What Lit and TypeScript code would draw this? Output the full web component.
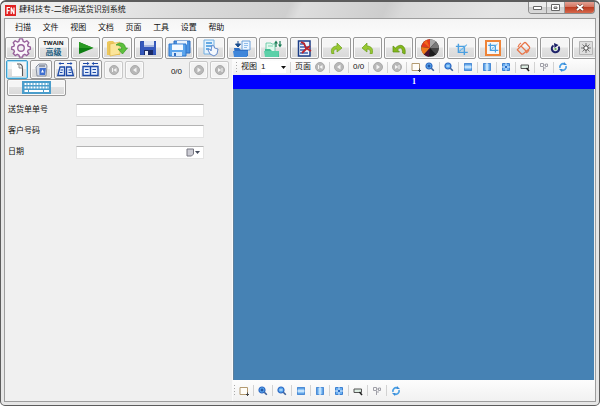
import { LitElement, html, css, svg, nothing, TemplateResult } from "lit";
import { customElement, property } from "lit/decorators.js";

const magnifier = (sign: TemplateResult) => svg`
  <circle cx="4" cy="4" r="3" fill="#5aa9ee" stroke="#2c68c4" stroke-width="1.2"/>
  ${sign}<path d="M6.3 6.3 8.8 8.8" stroke="#3a5f98" stroke-width="1.6"/>`;

const mediaArrow = (d: string) => svg`
  <circle cx="5" cy="5" r="4.5" fill="#b8b8b8" stroke="#aaa"/>
  <path d="${d}" fill="#f4f4f4"/>`;

const cropMarks = svg`
  <path d="M4 1V11H15M1 4H11V14" fill="none" stroke="#4a9fe0" stroke-width="1.7"/>
  <path d="M5 10 14 2" stroke="#63b0e8" stroke-width="1.2"/>
  <path d="M6 7h3v2" fill="none" stroke="#8fcbf0"/>`;

const curvedArrow = svg`
  <path d="M2 12C0 7 3 4 7 4V1L12 6 7 10V7C4 7 3 9 4 12Z" fill="#98c832" stroke="#6ba01c" stroke-width=".7"/>`;

const disk = svg`
  <path d="M1 0H16L17 1V14H0V1Z" fill="#3458bc" stroke="#24408f" stroke-width=".6"/>
  <path d="M4 0H14V6H4Z" fill="#dfe6f4"/><path d="M4 4H14V6H4Z" fill="#a9b8de"/>
  <path d="M4 9H13V14H4Z" fill="#1b2b66"/><path d="M5 10H8V14H5Z" fill="#eef2fb"/>`;

/** Each entry: [width, height, drawing]. */
const ICONS: Record<string, [number, number, TemplateResult]> = {
  logo: [11, 11, svg`<path d="M0 0H11V11H0Z" fill="#e02222"/>
    <path d="M2.2 9V2.5H5M2.2 5.6H4.6M6.2 9V2.5L9 9V2.5" fill="none" stroke="#fff" stroke-width="1.2"/>`],
  gear: [20, 20, svg`<g transform="scale(.91)"><path d="M9.3 1h3.4l.6 2.6 1.8.8 2.3-1.4 2.2 2.2-1.4 2.3.7 1.7 2.3.5v2.8l-2.3.6-.7 1.8 1.4 2.2-2.3 2.2-2.2-1.4-1.8.8-.6 2.3H9.3l-.6-2.3-1.8-.8-2.2 1.4-2.3-2.2 1.4-2.2-.7-1.8-2.3-.6V9.7l2.3-.5.7-1.7-1.4-2.3L4.600 3l2.300 1.400 1.800-.8Z" fill="#fbf6fb" stroke="#96609a" stroke-width="1.5" stroke-linejoin="round"/>
    <circle cx="11" cy="11" r="3.600" fill="#f2f2f2" stroke="#96609a" stroke-width="1.500"/></g>`],
  play: [16, 12, svg`<path d="M1 0 15.500 6 1 12Z" fill="#0d7d12"/><path d="M1 0 15.500 6H1Z" fill="#2a9a24"/>`],
  open: [22, 17, svg`<path d="M1 2 3 1H7L9 3H14V15H1Z" fill="#ecc75c"/>
    <path d="M4 4 14 2V14L4 16Z" fill="#fbe59a" stroke="#dcae3c" stroke-width=".6"/>
    <path d="M10 5C13 2 19 2 19.500 8H21.500L16.500 14 12 9H15.500C16 6 13 5 10 5Z" fill="#5cc03c" stroke="#3a9826" stroke-width=".7"/>`],
  save: [16, 14, disk],
  saveAll: [24, 17, svg`<path d="M6 1H22V13H6Z" fill="#4d93e0" stroke="#2c6cc0"/><path d="M9 1H19V5H9Z" fill="#eaf3fd"/>
    <path d="M1 4H18V16H1Z" fill="#5ca5ec" stroke="#2d74cc"/><path d="M4 4.500H15V10H4Z" fill="#f4f9ff"/>
    <path d="M4 12H14V16H4Z" fill="#d5e8fb"/><path d="M6 13H8V16H6Z" fill="#2d6cc2"/>`],
  docHand: [17, 18, svg`<path d="M2 1H12V15H2Z" fill="#e6f3fd" stroke="#72b0e2"/>
    <path d="M4 4H10M4 7H10M4 10H7" stroke="#3d93da" stroke-width="1.400"/>
    <path d="M6 11 8 10 9 12 10 6 12 7 12.500 9 16 10 15 15 12 17 8 15Z" fill="#f3f7fd" stroke="#5a83c8" stroke-width=".9"/>`],
  importBox: [18, 17, svg`<path d="M9 1H17V10H9Z" fill="#eaf4ff" stroke="#5e97d8" stroke-width=".9"/><path d="M11 3.500H15M11 5.500H15M11 7.500H14" stroke="#79aee6" stroke-width=".8"/>
    <path d="M5 1V5M2.500 4H7.500L5 7Z" fill="#174a8c" stroke="#174a8c"/>
    <path d="M1 8H6L8 10H15V16H2Z" fill="#2e6fc4"/><path d="M0 11H15L14 17H1Z" fill="#3f86da"/>`],
  exportBox: [18, 17, svg`<path d="M2 3H7L8 4H11V12H2Z" fill="#e2f8ee" stroke="#58c49c" stroke-width=".8"/>
    <path d="M4 6H9" stroke="#7ed4b2"/><path d="M1 9H6L8 11H15V17H1Z" fill="#43bf94"/><path d="M0 11H15L14 17H1Z" fill="#5cd0a8"/>
    <path d="M12 7V2M16 1V6" stroke="#167a52" stroke-width="1.200"/><path d="M10 3.500 12 .5 14 3.500ZM14 4.500H18L16 7.500Z" fill="#167a52"/>`],
  docCross: [15, 17, svg`<path d="M1.500 1H13V16H1.500Z" fill="#eef2fc" stroke="#1b3d86" stroke-width="1.500"/>
    <path d="M3 4H8M3 7H11M3 10H8M3 13H11" stroke="#3d64b0" stroke-width="1.300"/>
    <path d="M4 2 7 3.500 9 8 14 11M13 6 9 9 5 13" fill="none" stroke="#b8232c" stroke-width="1.800"/>`],
  redo: [12, 12, curvedArrow],
  undo: [12, 12, svg`<g transform="matrix(-1 0 0 1 13 0)">${curvedArrow}</g>`],
  rotateBack: [14, 13, svg`<path d="M1 4V10H7.500L5.500 8C8 4.500 11 6 10.500 11L13 12C14.500 5 9 0 3.500 6Z" fill="#84b81c" stroke="#5a8c10" stroke-width=".7"/>`],
  colours: [20, 18, svg`<circle cx="10" cy="9" r="8.800" fill="#1c1c1c"/>
    <path d="M10 9V.2A8.800 8.800 0 0 0 1.300 8Z" fill="#e23a1c"/><path d="M10 9 1.300 8A8.800 8.800 0 0 0 4 15.500Z" fill="#f07a1c"/><path d="M10 9 4 15.500A8.800 8.800 0 0 0 9 17.800Z" fill="#4c1230"/>
    <path d="M10 9 3.500 3.500 6.500 1Z" fill="#f0661c"/><path d="M10 9V.2A8.800 8.800 0 0 1 16 2.500Z" fill="#a8a8a8"/><path d="M10 9 16 2.500A8.800 8.800 0 0 1 18.800 9Z" fill="#787878"/><path d="M10 9H18.800A8.800 8.800 0 0 1 16 15.500Z" fill="#444"/>`],
  crop: [15, 15, svg`<g transform="translate(1 2) scale(.85)">${cropMarks}</g>`],
  cropFrame: [16, 16, svg`<path d="M1 1H15V15H1Z" fill="#f4f7fa" stroke="#ee8439" stroke-width="2"/><g transform="translate(2.500 2.500) scale(.72)">${cropMarks}</g>`],
  eraser: [15, 14, svg`<g fill="none" stroke="#e8764a" stroke-width="1.200" stroke-linejoin="round"><path d="M2 8 8 2Q9 1 10 2L13.500 6Q14 7 13 8L7 13Q6 13.500 5 12.500L1.500 9Q1 8.500 2 8Z"/><path d="M5 5 10.500 10.500M2 6Q3 3 5 2M13 9Q12 11 10 12"/></g>`],
  ring: [11, 11, svg`<path d="M3.500 2.500A3.700 3.700 0 1 0 8.500 3.500" fill="none" stroke="#1c2168" stroke-width="2"/><path d="M4 0 8.500 2 4.500 5Z" fill="#1c2168"/><circle cx="5.500" cy="6" r="1.100" fill="#58a84c"/>`],
  brightness: [14, 14, svg`<path d="M.5 .5H13.500V13.500H.5Z" fill="#dedede" stroke="#b4b4b4"/><path d="M7 2V12M2 7H12M3.500 3.500 10.500 10.500M10.500 3.500 3.500 10.500" stroke="#777"/><circle cx="7" cy="7" r="2.200" fill="#fff" stroke="#444"/>`],
  page: [13, 15, svg`<path d="M1 1H9L12 4V14H1Z" fill="#fff"/><path d="M6 2H9Q11.500 3 11.500 6V14" fill="none" stroke="#555" stroke-width="1.100"/><path d="M8 2V6H11.500" fill="#eee" stroke="#777" stroke-width=".8"/>`],
  bin: [13, 14, svg`<path d="M1 4 4 1H11L12 3 11 13H2Z" fill="#d7dde8" stroke="#7e8796" stroke-width=".9"/><path d="M4.500 5H11L10 12H4.500Z" fill="#3f6fd0"/><path d="M6 9.500 7.500 6.500 9 9.500Z" fill="#fff"/><path d="M4 3H10" stroke="#59606c"/>`],
  split: [17, 15, svg`<g fill="none" stroke="#1d4aa8" stroke-width="1.300"><path d="M3 5H7.500V13.500H.8ZM9.500 5H14L16.300 13.500H9.500Z" fill="#e4eefc"/><path d="M3.500 8H6M3 10.500H5.500M11.500 8H14M11.500 10.500H14.500M2 1.500H7M10 1.500H15" stroke-width="1"/></g><path d="M3.500 0V3L1.500 1.500ZM13.500 0V3L15.500 1.500Z" fill="#1d4aa8"/>`],
  join: [19, 15, svg`<g fill="none" stroke="#1d4aa8" stroke-width="1.400"><path d="M2 4.500H9.500V13.500H2ZM9.500 4.500H17V13.500H9.500Z" fill="#e4eefc"/><path d="M4 7.500H7.500M4 10.500H7.500M11.500 7.500H15M11.500 10.500H15M2 1.500H7M12 1.500H17" stroke-width="1"/></g><path d="M6 0V3L8.500 1.500ZM13 0V3L10.500 1.500Z" fill="#1d4aa8"/>`],
  first: [10, 10, mediaArrow("M3 3H4V7H3ZM7.500 3V7L4.200 5Z")],
  prev: [10, 10, mediaArrow("M6.500 2.500V7.500L3 5Z")],
  next: [10, 10, mediaArrow("M3.500 2.500V7.500L7 5Z")],
  last: [10, 10, mediaArrow("M6.500 3H7.500V7H6.500ZM3 3V7L6.300 5Z")],
  keyboard: [29, 13, svg`<path d="M0 0H29V13H0Z" fill="#4a9dcb"/><path d="M2.500 3H27M2.500 6.500H27" stroke="#fff" stroke-width="2" stroke-dasharray="2 1"/><path d="M2.500 10H6M7 10H21M22 10H27" stroke="#fff" stroke-width="2"/>`],
  select: [10, 10, svg`<path d="M1 1.500H8.500V8.500H1Z" fill="#fffdf8" stroke="#b39a70"/><path d="M8.500 6.500V10M7 8.500H10" stroke="#444"/>`],
  zoomIn: [10, 10, magnifier(svg`<path d="M2.500 4H5.500M4 2.500V5.500" stroke="#123a8c"/>`)],
  zoomOut: [10, 10, magnifier(svg`<path d="M2.500 4H5.500" stroke="#e9f4ff"/>`)],
  fitWidth: [10, 10, svg`<path d="M1.500 1.500H8.500V8.500H1.500Z" fill="#8cc6f8" stroke="#5a98dc"/><path d="M1.500 5H8.500" stroke="#fff"/><path d="M1 2H9M1 8H9" stroke="#3f80d0"/>`],
  fitHeight: [10, 10, svg`<path d="M1.500 1.500H8.500V8.500H1.500Z" fill="#8cc6f8" stroke="#5a98dc"/><path d="M5 1V9" stroke="#fff"/><path d="M2 1V9M8 1V9" stroke="#3f80d0"/>`],
  fitPage: [10, 10, svg`<path d="M1.500 1.500H8.500V8.500H1.500Z" fill="#6aaef0" stroke="#3d80d0"/><path d="M5 1V9M1 5H9" stroke="#d8ecff"/><path d="M4 4H6V6H4Z" fill="#2b6cc8"/>`],
  actual: [10, 10, svg`<path d="M1 3H8.500V6.500H1Z" fill="#dcece2" stroke="#555"/><path d="M6.500 6 9 9" stroke="#222" stroke-width="1.500"/>`],
  tree: [10, 10, svg`<path d="M1.500 1.500H4.500V4.500H1.500ZM4.500 3H7M4.500 5V9M6.500 2H8.500V4.500H6.500ZM4.500 6H7" fill="none" stroke="#a0a0a8"/>`],
  refresh: [10, 10, svg`<path d="M2 6A3.300 3.300 0 0 1 6.500 2M8 4A3.300 3.300 0 0 1 3.500 8" fill="none" stroke="#4a9fe4" stroke-width="1.700"/><path d="M6 0 9 3H5.500ZM4 10 1 7H4.500Z" fill="#3a8cd8"/>`],
};

@customElement("ui-icon")
class UiIcon extends LitElement {
  @property() name = "";
  static styles = css`
    :host { display: flex; flex: none; }
    svg { display: block; }
  `;
  render() {
    const icon = ICONS[this.name];
    if (!icon) return nothing;
    const [w, h, art] = icon;
    return html`<svg width=${w} height=${h} viewBox="0 0 ${w} ${h}" aria-hidden="true">${art}</svg>`;
  }
}

const MENUS = ["扫描", "文件", "视图", "文档", "页面", "工具", "设置", "帮助"];
const TOOLS: [string, string][] = [
  ["play", "开始"], ["open", "打开"], ["save", "保存"], ["saveAll", "全部保存"], ["docHand", "选择"],
  ["importBox", "导入"], ["exportBox", "导出"], ["docCross", "删除"], ["redo", "右转"], ["undo", "左转"],
  ["rotateBack", "翻转"], ["colours", "颜色"], ["crop", "裁剪"], ["cropFrame", "裁剪框"], ["eraser", "擦除"],
  ["ring", "旋转"], ["brightness", "亮度"],
];
const VIEW_TOOLS: [string, string][] = [
  ["zoomIn", "放大"], ["zoomOut", "缩小"], ["fitWidth", "适合宽度"], ["fitHeight", "适合高度"],
  ["fitPage", "适合页面"], ["actual", "实际大小"], ["tree", "结构"], ["refresh", "刷新"],
];

@customElement("app-root")
class AppRoot extends LitElement {
  static styles = css`
    :host { display: block; font: 8px/10px "Liberation Sans", "Noto Sans CJK SC", sans-serif; color: #111; background: #fff; }
    * { box-sizing: border-box; }
    button, input, select { font: inherit; color: inherit; margin: 0; padding: 0; }
    .window { min-height: 100vh; display: flex; flex-direction: column; padding: 0 3px 3px; border: 1px solid #5c5c5c; border-top-width: 2px; border-radius: 6px 6px 5px 5px; background: #e6e6e6; }
    .title { display: flex; align-items: flex-start; height: 16px; padding-left: 1px; margin: 0 -3px; background: linear-gradient(115deg, #ededed 0 12%, #dcdcdc 30%, #cfcfcf 48%, #dedede 50%, #cdcdcd 64%, #d9d9d9 67%, #e4e4e4 82%, #dcdcdc); border-radius: 5px 5px 0 0; }
    .title h1 { flex: 1; display: flex; align-items: center; gap: 3px; margin: 0; padding: 1px 0 0 3px; height: 15px; font-size: 8px; font-weight: 400; }
    .controls { display: flex; height: 12px; margin-right: 4px; border: 1px solid #8c8c8c; border-top: 0; border-radius: 0 0 4px 4px; overflow: hidden; }
    .controls button { width: 18px; border: 0; border-right: 1px solid #999; background: linear-gradient(#ececec 45%, #cfcfcf 50%, #dadada); display: grid; place-items: center; }
    .controls .close { width: 29px; border-right: 0; background: linear-gradient(#e4a093 0, #d4735f 45%, #bd3c22 50%, #d5684c); }
    .client { flex: 1; display: flex; flex-direction: column; border: 1px solid #9d9d9d; background: #f0f0f0; min-width: 0; }
    .menu { display: grid; grid-template-columns: repeat(8, 1fr); width: 231px; height: 18px; padding-left: 10px; align-items: center; justify-items: start; }
    .menubar { background: linear-gradient(#f5f5f5, #fcfcfc); }
    .menu button { border: 0; background: none; white-space: nowrap; }
    .btn { display: flex; align-items: center; justify-content: center; border: 1px solid #989898; border-radius: 2px; background: linear-gradient(#f5f5f5 45%, #e2e2e2 50%, #d8d8d8); box-shadow: inset 0 0 0 1px #fafafa; }
    .tools { overflow: hidden; background: #fafafa; }
    .strip { display: flex; gap: 2px; height: 22px; margin-right: -6px; }
    .strip .btn { flex: 1 1 0; min-width: 0; height: 22px; overflow: hidden; }
    .strip .fixed { flex: 0 0 31px; }
    .strip .twain { flex-direction: column; font: bold 6px/8px "Open Sans", "Noto Sans CJK SC", sans-serif; color: #111; }
    .twain .sub { font-size: 8px; line-height: 10px; color: #236083; }
    .body { flex: 1; display: grid; grid-template-columns: 227px minmax(0, 1fr); }
    .left { background: #f0f0f0; }
    .nav { display: flex; gap: 2px; height: 20px; padding: 1px 3px 0 1px; align-items: center; }
    .nav .btn { width: 22px; height: 19px; }
    .nav .wide { width: 23px; }
    .nav .dim { width: 19px; height: 18px; border-color: #c8c8c8; background: #f3f3f3; }
    .nav .active { border-color: #3c9fd0; box-shadow: inset 0 0 0 1px #a6def5; }
    .count { flex: 1; text-align: right; padding: 4px 5px 0 0; }
    .key { width: 59px; height: 17px; margin-left: 2px; }
    .form { display: grid; grid-template-columns: 65px 128px; gap: 8px 3px; padding: 8px 3px; align-items: center; }
    .form label { line-height: 12px; padding-bottom: 1px; }
    .form input { height: 13px; width: 100%; border: 1px solid #e4e4e4; border-top-color: #b4b4b4; background: #fff; padding: 0 2px; }
    .date { display: flex; height: 13px; border: 1px solid #e4e4e4; border-top-color: #b4b4b4; background: #fff; }
    .form .date input { border: 0; height: 11px; flex: 1; min-width: 0; }
    .date button { width: 17px; border: 0; background: none; display: flex; align-items: center; }
    .right { display: flex; flex-direction: column; min-width: 0; border-left: 1px solid #fafafa; }
    .bar { display: flex; align-items: center; gap: 4px; height: 16px; padding-left: 3px; background: linear-gradient(#fdfdfd, #f1f1f1); overflow: hidden; }
    .bar button { border: 0; background: none; display: flex; flex: none; }
    .bar label { white-space: nowrap; }
    .bar select { appearance: none; border: 0; width: 20px; height: 12px; background: #fff; }
    .pick { display: flex; align-items: center; background: #fff; }
    .sep { flex: none; width: 1px; height: 11px; background: #d2d2d2; }
    .grip { flex: none; width: 1px; height: 11px; background: repeating-linear-gradient(#aaa 0 1px, transparent 1px 3px); }
    .pair { display: flex; gap: 4px; }
    .bottom { height: 21px; padding-left: 1px; }
    .tab { height: 14px; background: #00f; color: #fff; text-align: center; font: bold 8px/14px "Liberation Serif", serif; }
    .canvas { flex: 1; background: #4682b4; border-left: 1px solid #5d7f9b; margin-right: 1px; }
  `;

  private tool([icon, label]: [string, string], cls = "") {
    return html`<button class="btn ${cls}" aria-label=${label}><ui-icon name=${icon}></ui-icon></button>`;
  }

  private flat(icon: string, label: string) {
    return html`<button aria-label=${label}><ui-icon name=${icon}></ui-icon></button>`;
  }

  private viewTools(from = 0) {
    return VIEW_TOOLS.slice(from).map(([i, l]) => html`<span class="sep"></span>${this.flat(i, l)}`);
  }

  render() {
    return html`
      <div class="window">
        <header class="title">
          <h1><ui-icon name="logo"></ui-icon>肆科技专-二维码送货识别系统</h1>
          <div class="controls">
            <button aria-label="最小化"><svg width="9" height="5"><path d="M.5 1.500H8.500V4.500H.5Z" fill="#fff" stroke="#666"/></svg></button>
            <button aria-label="最大化"><svg width="9" height="7"><path d="M.5 .5H8.500V6.500H.5ZM3 3H6V4.500H3Z" fill="#fff" stroke="#666"/></svg></button>
            <button class="close" aria-label="关闭"><svg width="8" height="7"><path d="M1 1 7 6M7 1 1 6" stroke="#6d3a34" stroke-width="3"/><path d="M1 1 7 6M7 1 1 6" stroke="#fff" stroke-width="1.800"/></svg></button>
          </div>
        </header>
        <main class="client">
          <div class="menubar"><nav class="menu">${MENUS.map((m) => html`<button>${m}</button>`)}</nav></div>
          <div class="tools">
            <div class="strip">
              ${this.tool(["gear", "设置"], "fixed")}
              <button class="btn fixed twain"><span>TWAIN</span><span class="sub">高级</span></button>
              ${TOOLS.map((t) => this.tool(t))}
            </div>
          </div>
          <div class="body">
            <section class="left">
              <div class="nav">
                ${this.tool(["page", "新建"], "active")}${this.tool(["bin", "清空"])}
                ${this.tool(["split", "拆分"], "wide")}${this.tool(["join", "合并"], "wide")}
                ${this.tool(["first", "首页"], "dim")}${this.tool(["prev", "上一页"], "dim")}
                <span class="count">0/0</span>
                ${this.tool(["next", "下一页"], "dim")}${this.tool(["last", "末页"], "dim")}
              </div>
              ${this.tool(["keyboard", "键盘"], "key")}
              <form class="form">
                <label for="order">送货单单号</label><input id="order" type="text" />
                <label for="customer">客户号码</label><input id="customer" type="text" />
                <label for="date">日期</label>
                <div class="date"><input id="date" type="text" />
                  <button type="button" aria-label="选择日期"><svg width="15" height="9"><path d="M1 1H7.500V6L5.500 8H1Z" fill="#ccccd4" stroke="#777781"/><path d="M9 3H14L11.500 6Z" fill="#444b5c"/></svg></button>
                </div>
              </form>
            </section>
            <section class="right">
              <div class="bar">
                <span class="grip"></span>
                <label for="view">视图</label>
                <span class="pick"><select id="view"><option>1</option></select>
                  <svg width="5" height="3" aria-hidden="true"><path d="M0 0H5L2.500 3Z" fill="#111"/></svg></span>
                <span class="sep"></span><span>页面</span>
                ${this.flat("first", "首页")}<span class="sep"></span>${this.flat("prev", "上一页")}
                <span class="sep"></span><span>0/0</span><span class="sep"></span>
                ${this.flat("next", "下一页")}<span class="sep"></span>${this.flat("last", "末页")}
                <span class="sep"></span>
                <span class="pair">${this.flat("select", "选择")}${this.flat("zoomIn", "放大")}</span>
                ${this.viewTools(1)}
              </div>
              <div class="tab">1</div>
              <div class="canvas"></div>
              <div class="bar bottom">
                <span class="grip"></span>${this.flat("select", "选择")}${this.viewTools()}
              </div>
            </section>
          </div>
        </main>
      </div>
    `;
  }
}
